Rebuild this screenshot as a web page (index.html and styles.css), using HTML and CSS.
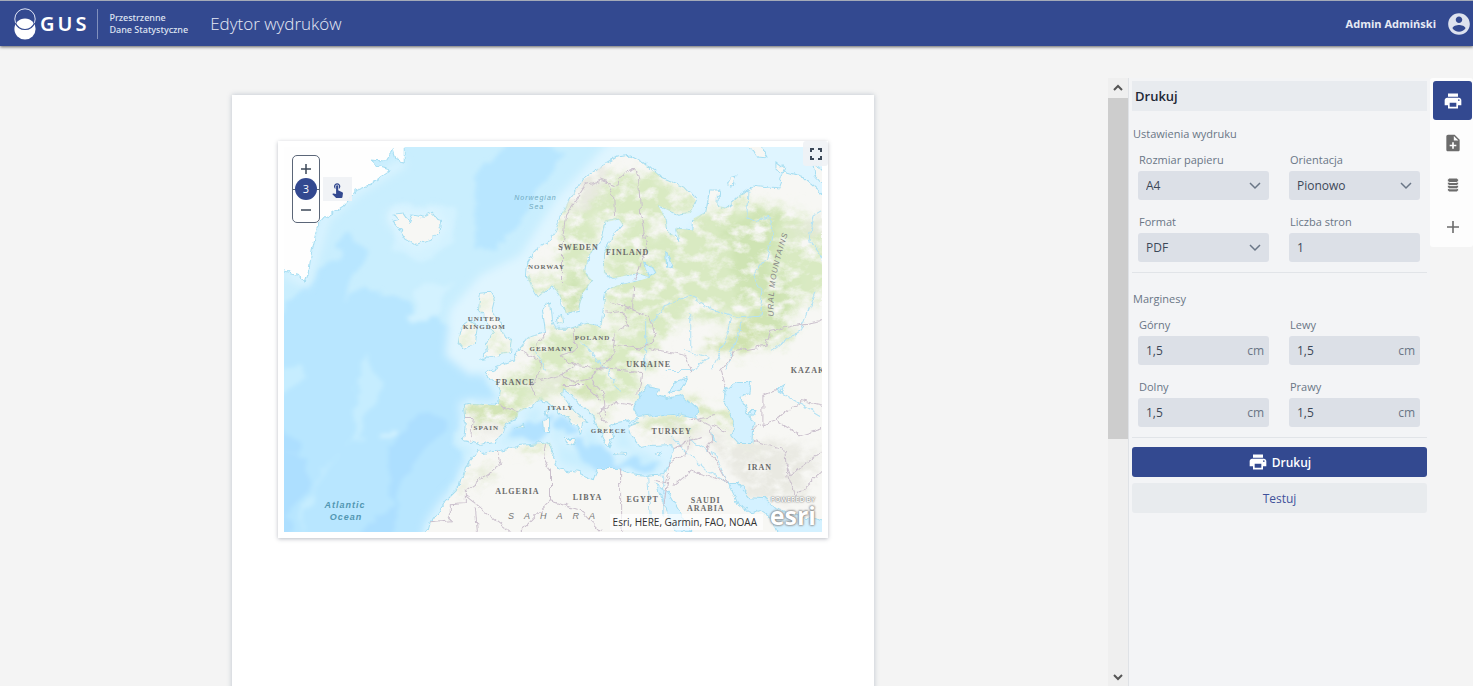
FILE: index.html
```html
<!DOCTYPE html>
<html lang="pl">
<head>
<meta charset="utf-8">
<title>Edytor wydruków</title>
<link rel="stylesheet" href="styles.css">
</head>
<body>
<svg class="sprite" aria-hidden="true">
  <symbol id="i-print" viewBox="0 0 24 24"><path d="M19 8H5c-1.660 0-3 1.340-3 3v6h4v4h12v-4h4v-6c0-1.660-1.340-3-3-3zm-3 11H8v-5h8v5zm3-7c-.55 0-1-.45-1-1s.45-1 1-1 1 .45 1 1-.45 1-1 1zm-1-9H6v4h12V3z"/></symbol>
  <symbol id="i-user" viewBox="0 0 24 24"><path d="M12 2C6.480 2 2 6.480 2 12s4.480 10 10 10 10-4.480 10-10S17.520 2 12 2zm0 3c1.660 0 3 1.340 3 3s-1.340 3-3 3-3-1.340-3-3 1.340-3 3-3zm0 14.200c-2.500 0-4.710-1.280-6-3.220.03-1.990 4-3.080 6-3.080 1.990 0 5.970 1.090 6 3.080-1.290 1.940-3.500 3.220-6 3.220z"/></symbol>
  <symbol id="i-note" viewBox="0 0 24 24"><path d="M14 2H6c-1.100 0-2 .9-2 2v16c0 1.100.9 2 2 2h12c1.100 0 2-.9 2-2V8l-6-6zm2 14h-3v3h-2v-3H8v-2h3v-3h2v3h3v2zm-3-7V3.500L18.500 9H13z"/></symbol>
  <symbol id="i-chevron" viewBox="0 0 12 8"><path d="M1 1l5 5 5-5" fill="none" stroke="currentColor" stroke-width="1.500"/></symbol>
</svg>

<header class="topbar">
  <svg class="logo" viewBox="0 0 24 34" aria-hidden="true">
    <circle cx="12" cy="12" r="10.200" fill="none" stroke="#dfe5f6" stroke-width="1"/>
    <circle cx="12" cy="22" r="10.600" fill="#fff"/>
    <path d="M2.500 16a10.200 10.200 0 0 0 19 0" fill="none" stroke="#33488f" stroke-width="1.200"/>
  </svg>
  <span class="brand">GUS</span>
  <span class="tagline">Przestrzenne<br>Dane Statystyczne</span>
  <h1 class="title">Edytor wydruków</h1>
  <span class="user">Admin Admiński</span>
  <button class="avatar" aria-label="Konto"><svg><use href="#i-user"/></svg></button>
</header>

<main class="workspace">
  <section class="canvas">
    <div class="sheet">
      <div class="map">
        <svg class="map-view" viewBox="284 147 537 384" preserveAspectRatio="xMidYMid slice" role="img" aria-label="Mapa Europy">
          <defs>
            <filter id="rough" x="-5%" y="-5%" width="110%" height="110%"><feTurbulence type="fractalNoise" baseFrequency="0.11" numOctaves="3" seed="4"/><feDisplacementMap in="SourceGraphic" scale="7" xChannelSelector="R" yChannelSelector="G"/></filter>
            <filter id="sea" x="-10%" y="-10%" width="120%" height="120%"><feTurbulence type="fractalNoise" baseFrequency="0.04" numOctaves="4" seed="9" result="n"/><feDisplacementMap in="SourceGraphic" in2="n" scale="26" xChannelSelector="R" yChannelSelector="G"/><feGaussianBlur stdDeviation="2"/></filter>
            <filter id="soft" x="-10%" y="-10%" width="120%" height="120%"><feGaussianBlur stdDeviation="4"/></filter>
            <filter id="veg" filterUnits="userSpaceOnUse" x="284" y="147" width="538" height="384"><feTurbulence type="fractalNoise" baseFrequency="0.06 0.08" numOctaves="5" seed="12" result="n"/><feGaussianBlur in="SourceGraphic" stdDeviation="6" result="b"/><feDisplacementMap in="b" in2="n" scale="24" xChannelSelector="R" yChannelSelector="G" result="d"/><feColorMatrix in="n" type="matrix" values="0 0 0 0 0  0 0 0 0 0  0 0 0 0 0  0 0 0 3 -0.650" result="m"/><feComposite in="d" in2="m" operator="in"/></filter>
            <path id="continent" d="M538 297L530 286 526 275 527 263 535 250 550 240 556 228 560 217 570 197 583 180 600 167 617 157 630 155 643 162 660 177 683 187 695 200 690 213 677 215 657 205 665 218 667 230 678 240 675 228 692 230 693 218 705 212 709 190 718 190 717 205 725 208 737 197 753 185 777 188 783 172 803 178 830 202V540H425L430 522 445 500 460 485 465 467 475 455 478 449 482 453 500 450 520 445 550 442 553 450 552 458 558 468 577 472 593 479 598 468 617 468 630 473 647 475 663 473 668 463 672 448 671 444 650 445 640 447 632 437 628 425 637 422 627 420 617 422 610 425 613 437 608 447 602 438 597 427 593 417 583 407 572 395 563 388 562 395 570 407 588 422 582 423 580 433 577 425 560 413 547 402 540 399 518 412 517 417 505 423 502 433 493 442 480 445 472 442 463 440 465 423 463 405 470 403 498 405 500 390 497 383 485 372 500 365 512 360 518 350 528 337 545 332 542 308 550 302 552 320 555 328 570 328 587 323 600 327 603 307 605 290 617 285 633 282 650 277 637 273 613 278 603 273 603 253 612 237 622 225 618 219 605 222 602 237 587 257 585 273 592 280 582 293 578 310 565 313 560 297 552 285Z"/>
            <path id="islands" d="M480 293L490 292 495 300 492 312 500 323 505 337 512 340 510 352 480 358 487 352 485 345 492 333 485 317 478 310ZM470 320L477 325 475 343 462 348 457 342 460 327ZM392 221L398 219 394 214 403 213 409 222 412 215 423 217 432 212 442 225 433 238 417 245 405 238 400 230ZM556 319L562 315 563 323 557 324ZM744 140L760 145 767 158 757 157ZM775 161L784 168 781 173 775 167ZM728 178L735 176 732 185 728 184ZM812 165L823 170 823 186 814 176ZM543 421L549 419 549 431 544 431ZM545 410L549 409 548 417ZM564 438L575 438 573 444 564 440ZM614 452L626 453 625 455 614 454ZM655 453L662 451 659 456ZM515 428L523 423 524 427Z"/>
            <clipPath id="landclip"><use href="#continent"/><use href="#islands"/></clipPath>
          </defs>
          <rect x="284" y="147" width="538" height="384" fill="#c9eefe"/>
          <g filter="url(#sea)">
            <path fill="#b8e6ff" d="M475 170L515 140 570 150 530 200 510 245 475 250ZM270 315L320 270 355 235 370 250 340 300 390 290 440 320 480 345 490 385 515 410 465 400 455 440 470 460 430 520 420 550 270 550Z"/>
            <path fill="#addfff" d="M270 425L305 435 300 455 270 450ZM390 440L430 415 450 430 420 450 410 480 395 500 390 550 350 550 390 500ZM270 450L310 460 285 550 270 550Z"/>
            <path fill="#c6edff" d="M285 365L300 362 305 380 285 390ZM365 350L385 390 365 425 350 440 320 475 305 500 302 550 310 495 345 445 355 420Z"/>
            <path fill="#d3f2ff" d="M390 205L450 205 460 235 420 260 390 250ZM420 290L445 280 440 310 415 320ZM385 429L393 438 378 435Z"/>
          </g>
          <g filter="url(#soft)" fill="#dff5ff">
            <path d="M520 255L555 200 610 140H840V210H700L640 290 560 350 470 375 445 355 450 310 480 275Z"/>
            <path d="M620 210H602L590 260 540 320 630 330 645 260Z"/>
            <g fill="none" stroke="#dff5ff" stroke-width="9" opacity=".8"><use href="#continent"/><use href="#islands"/><path d="M404 162L355 192 325 218 313 260 305 282 285 272"/></g>
          </g>
          <g filter="url(#sea)" fill="#b2e2ff">
            <path d="M520 425L545 410 550 435 510 440ZM552 410L580 432 565 438 552 425ZM575 440L600 445 625 462 660 455 655 470 610 465 595 470 577 455Z"/>
          </g>
          <g filter="url(#rough)">
            <g fill="#f7f7f4" stroke="#a6def2" stroke-width="1"><use href="#continent"/><use href="#islands"/></g>
            <path fill="#fefefe" stroke="#a6def2" d="M278 140H404V162L395 160 392 150 385 161 372 160 380 167 390 170 370 184 355 190 350 199 345 205 325 218 317 227 312 250 309 270 305 282 297 274 278 269Z"/>
          </g>
          <g clip-path="url(#landclip)"><g filter="url(#veg)" fill="#d9eac2">
            <path d="M560 215L605 175 655 170 700 205 650 225 640 280 680 320 650 350 610 310 605 265 620 220 600 215 590 265 575 320 555 305 558 260Z"/>
            <path d="M640 235L740 200 790 210 840 230V300L795 300 785 345 765 350 750 320 710 320 640 310Z"/>
            <path fill="#cfe4b4" d="M720 225L775 205 775 295 740 300ZM762 290L795 275 780 345 762 345ZM565 290L590 265 585 320 565 315Z"/>
            <path d="M540 330L600 325 645 340 655 365 600 380 560 380 525 360ZM510 375L550 360 560 390 510 410 495 400ZM590 375L635 370 645 395 600 405Z"/>
            <path fill="#cfe2ae" d="M460 400L535 408 515 424 468 418ZM560 375L600 385 585 400 565 390ZM675 395L745 418 740 428 690 412ZM635 418L700 418 690 428 645 430ZM515 449L550 442 535 454ZM730 441L760 446 745 452ZM455 490L495 462 485 478ZM695 355L765 305 755 350ZM595 405L610 425 600 425ZM540 395L580 425 575 425Z"/>
            <path d="M530 285L545 265 555 290 540 300ZM480 340L515 340 500 357ZM478 300L492 295 490 310ZM458 330L475 325 470 345Z"/>
          </g>
          <g filter="url(#veg)" fill="#e9e9e2"><path d="M560 205L600 160 615 170 580 215ZM530 380L560 372 560 384 530 390ZM635 430L700 430 690 445ZM700 430L820 450 800 500 750 500ZM455 490L500 460 480 482ZM560 400L580 425 575 415ZM780 235L830 215V230ZM475 420L505 425 490 445Z"/></g></g>
          <g filter="url(#rough)">
            <g fill="#c0e9fe" stroke="#a6def2">
              <path d="M633 408L638 397 647 385 660 388 657 395 667 398 680 395 697 410 695 418 673 413 653 415 638 417Z"/>
              <path fill="#d4f1ff" d="M667 392L672 383 687 378 678 390ZM725 388L737 382 750 382 748 393 740 397 747 412 753 422 752 443 737 443 730 435 733 425 727 407 722 398ZM655 483L667 492 690 531 675 531ZM727 482L737 482 750 497 765 498 775 508 795 514 830 522V540H780L772 520 758 510 750 512 738 505 732 492ZM643 263L652 265 655 273 648 277ZM665 252L668 258 672 267 666 268ZM750 410L756 410 754 416 749 414ZM776 390L784 385 780 392ZM712 432L715 440 712 438Z"/>
              <path fill="#d9f3ff" d="M625 420L636 417 637 419 628 422Z"/>
            </g>
            <g fill="none" stroke="#b3e2f4" stroke-width="1">
              <path d="M747 190L746 218 757 222 768 215 772 235 766 258 752 275 762 292 758 315 735 317 712 310 690 295 665 305 650 325M730 317L727 330 720 350 712 368M742 320L725 370M645 320V370M580 340L610 375 620 390M665 370L690 370 707 357 685 350M822 258L808 240 812 215 822 209M815 290L800 330 770 350M535 350L545 370M663 474V515M647 474L650 525M670 435L705 470 725 482M690 440L715 455 727 482M780 392L798 402 820 415M690 315L690 350"/>
            </g>
            <g fill="none" stroke="#cbc0cd" stroke-width="1">
              <path d="M561 285V250L565 215 585 185 600 180 615 186 623 173 635 168 638 180 640 215 646 245 640 265 633 280M614 217L613 195 605 180M633 285L632 310 610 302M605 312L622 310 628 325 618 330M632 310L648 315 655 335 642 348 613 345 615 330M647 348L685 355 690 372M572 328L575 350 560 355 575 365 600 368 612 355 613 345M520 350L540 362 538 378 528 385 535 397M545 332L536 345M575 365L560 375 575 382 590 378 600 368 640 372 637 395M540 380L560 375M563 385L585 385 600 400M590 378L603 392 605 415M597 412L615 402 633 405M597 412L605 422M500 405L518 412M465 418L472 418 470 440M497 451L500 465 465 490V502L450 503V520L430 522M465 495L510 531M475 507L477 531M545 443L543 458 550 470V500L520 531M550 500L580 510 600 531M620 468V531M668 463L665 482 655 480M672 448L700 437M695 420L710 425 712 440 705 448 715 460 727 482M672 485L690 470 727 482M690 437L685 455 668 463M663 505L668 475M712 425L725 430M725 388L720 370 735 350 765 345 770 330 822 320M762 428V395L775 390M750 428L775 420 800 435 822 428M753 440L785 450 787 475 795 495 822 470M785 462L790 475 822 450M775 420L800 400 822 405M690 420L715 415"/>
            </g>
          </g>
          <g class="lbl">
            <text x="578" y="250">SWEDEN</text><text x="627" y="255">FINLAND</text><text class="tight" x="546" y="269">NORWAY</text>
            <text class="tight" x="484" y="321">UNITED</text><text class="tight" x="484" y="329">KINGDOM</text>
            <text class="tight" x="592" y="340">POLAND</text><text class="tight" x="551" y="351">GERMANY</text><text x="648" y="367">UKRAINE</text>
            <text x="515" y="385">FRANCE</text><text class="tight" x="560" y="410">ITALY</text><text class="tight" x="486" y="429">SPAIN</text>
            <text class="tight" x="608" y="432">GREECE</text><text x="671" y="433">TURKEY</text><text x="807" y="373">KAZAK</text><text x="759" y="469">IRAN</text>
            <text x="517" y="493">ALGERIA</text><text x="587" y="499">LIBYA</text><text x="642" y="501">EGYPT</text>
            <text x="705" y="502">SAUDI</text><text x="705" y="510">ARABIA</text>
          </g>
          <g class="lbl-water"><text x="535" y="200">Norwegian</text><text x="536" y="209">Sea</text></g>
          <g class="lbl-ocean"><text x="345" y="507">Atlantic</text><text x="346" y="519">Ocean</text></g>
          <text class="lbl-desert" x="556" y="518">SAHARA</text>
          <path id="ural" d="M773 316C771 290 776 265 789 228" fill="none"/>
          <text class="lbl-range"><textPath href="#ural">URAL MOUNTAINS</textPath></text>
        </svg>
        <div class="zoomer">
          <button aria-label="Przybliż"><svg viewBox="0 0 12 12"><path d="M6 1v10M1 6h10"/></svg></button>
          <span class="level">3</span>
          <button aria-label="Oddal"><svg viewBox="0 0 12 12"><path d="M1 6h10"/></svg></button>
        </div>
        <button class="touch" aria-label="Wskaż"><svg viewBox="0 0 24 24"><path d="M9 11.240V7.500C9 6.120 10.120 5 11.500 5S14 6.120 14 7.500v3.740c1.210-.81 2-2.180 2-3.740C16 5.010 13.990 3 11.500 3S7 5.010 7 7.500c0 1.560.79 2.930 2 3.740zm9.840 4.630l-4.540-2.260c-.17-.07-.35-.11-.54-.11H13v-6c0-.83-.67-1.500-1.500-1.500S10 6.670 10 7.500v10.740l-3.430-.72c-.08-.01-.15-.03-.24-.03-.31 0-.59.13-.79.33l-.79.8 4.940 4.940c.27.27.65.44 1.060.44h6.790c.75 0 1.330-.55 1.440-1.280l.75-5.270c.01-.07.02-.14.02-.2 0-.62-.38-1.160-.91-1.380z"/></svg></button>
        <button class="full" aria-label="Pełny ekran"><svg viewBox="0 0 12 12"><path d="M1 4V1h3M8 1h3v3M11 8v3H8M4 11H1V8"/></svg></button>
        <span class="credit">Esri, HERE, Garmin, FAO, NOAA</span>
        <span class="esri"><small>POWERED BY</small><b>esri</b></span>
      </div>
    </div>
  </section>

  <div class="scroll" aria-hidden="true">
    <svg viewBox="0 0 12 8"><path d="M2 6l4-4 4 4"/></svg>
    <div class="track"><div class="thumb"></div></div>
    <svg viewBox="0 0 12 8"><path d="M2 3l4 4 4-4"/></svg>
  </div>

  <form class="panel">
    <h2>Drukuj</h2>
    <fieldset>
      <legend>Ustawienia wydruku</legend>
      <div class="fields">
        <div class="field"><label for="size">Rozmiar papieru</label><div class="box"><select id="size"><option>A4</option></select><svg><use href="#i-chevron"/></svg></div></div>
        <div class="field"><label for="orient">Orientacja</label><div class="box"><select id="orient"><option>Pionowo</option></select><svg><use href="#i-chevron"/></svg></div></div>
        <div class="field"><label for="format">Format</label><div class="box"><select id="format"><option>PDF</option></select><svg><use href="#i-chevron"/></svg></div></div>
        <div class="field"><label for="pages">Liczba stron</label><div class="box"><input id="pages" value="1"></div></div>
      </div>
    </fieldset>
    <fieldset>
      <legend>Marginesy</legend>
      <div class="fields">
        <div class="field"><label for="mt">Górny</label><div class="box"><input id="mt" value="1,5"><span>cm</span></div></div>
        <div class="field"><label for="ml">Lewy</label><div class="box"><input id="ml" value="1,5"><span>cm</span></div></div>
        <div class="field"><label for="mb">Dolny</label><div class="box"><input id="mb" value="1,5"><span>cm</span></div></div>
        <div class="field"><label for="mr">Prawy</label><div class="box"><input id="mr" value="1,5"><span>cm</span></div></div>
      </div>
    </fieldset>
    <div class="actions">
      <button type="button" class="primary"><svg><use href="#i-print"/></svg>Drukuj</button>
      <button type="button" class="secondary">Testuj</button>
    </div>
  </form>

  <nav class="tools">
    <button class="active" aria-label="Drukuj"><svg><use href="#i-print"/></svg></button>
    <button aria-label="Dodaj stronę"><svg><use href="#i-note"/></svg></button>
    <button aria-label="Dane"><svg viewBox="0 0 20 20"><g stroke="#fdfdfd" stroke-width="1"><rect x="4.500" y="12.500" width="11" height="4.500" rx="2.200"/><rect x="4.500" y="9.300" width="11" height="4.500" rx="2.200"/><rect x="4.500" y="6.100" width="11" height="4.500" rx="2.200"/><rect x="4.500" y="3" width="11" height="4.500" rx="2.200"/></g></svg></button>
    <button aria-label="Dodaj"><svg viewBox="0 0 20 20"><path d="M10 4v12M4 10h12" stroke="currentColor" stroke-width="1.600"/></svg></button>
  </nav>
</main>
</body>
</html>
```

FILE: styles.css
```css
* { box-sizing: border-box; }
body {
  margin: 0;
  height: 100vh;
  overflow: hidden;
  display: flex;
  flex-direction: column;
  background: #f4f4f4;
  font-family: "Open Sans", "Noto Sans", sans-serif;
  font-size: 12px;
  color: #3c4858;
}
button, input, select { font: inherit; color: inherit; border: 0; padding: 0; margin: 0; background: none; }
svg { display: block; fill: currentColor; flex: none; }
.sprite { position: absolute; width: 0; height: 0; }

.topbar {
  height: 46px;
  flex: none;
  display: flex;
  align-items: center;
  padding: 0 1px 0 13px;
  background: #334990;
  border-top: 1px solid #a4aab8;
  box-shadow: 0 1px 3px rgba(0, 0, 0, .6);
  color: #fff;
}
.logo { width: 24px; height: 34px; }
.brand {
  margin-left: 3px;
  padding-right: 8px;
  font: 600 20px/30px "Noto Sans", sans-serif;
  letter-spacing: 3px;
  border-right: 1px solid #8190bd;
}
.tagline { margin-left: 11px; font: 500 9px/12px "Noto Sans", sans-serif; color: #dfe4f2; }
.title { margin: 0 auto 0 22px; font-size: 17px; font-weight: 300; color: #e6eaf5; }
.user { font-size: 11px; font-weight: 700; color: #e6eaf5; }
.avatar { margin-left: 10px; color: #dde2ee; }
.avatar svg { width: 26px; height: 26px; }

.workspace { flex: 1; min-height: 0; display: flex; padding-top: 32px; }
.canvas { flex: 1; min-width: 0; margin-top: -32px; padding: 49px 2px 0 0; overflow: hidden; }
.sheet {
  width: 58%;
  min-width: 642px;
  aspect-ratio: 210 / 297;
  margin: 0 auto;
  padding: 46px;
  background: #fff;
  box-shadow: 0 0 5px rgba(100, 120, 145, .4);
}
.map { position: relative; padding: 6px; background: #fff; box-shadow: 0 1px 4px rgba(60, 70, 90, .35); }
.map-view { width: 100%; height: auto; }

.lbl text, .lbl-water text, .lbl-ocean text, .lbl-desert { text-anchor: middle; }
.lbl { font: 700 8px "Liberation Serif", serif; letter-spacing: 1px; fill: #6b6b6b; }
.lbl .tight { font-size: 7px; }
.lbl-water { font: italic 7px "Liberation Sans", sans-serif; letter-spacing: 1px; fill: #70aac0; }
.lbl-ocean { font: italic 700 9px "Liberation Sans", sans-serif; letter-spacing: 1px; fill: #5296b2; }
.lbl-desert { font: italic 9px "Liberation Sans", sans-serif; letter-spacing: 10px; fill: #777; }
.lbl-range { font: italic 8px "Liberation Sans", sans-serif; letter-spacing: 1px; fill: #858585; }

.zoomer {
  position: absolute;
  left: 14px;
  top: 14px;
  width: 28px;
  height: 68px;
  padding: 3px 0;
  display: flex;
  flex-direction: column;
  align-items: center;
  justify-content: space-between;
  background: #fff linear-gradient(#5b6678, #5b6678) center / 100% 1px no-repeat;
  border: 1px solid #5b6678;
  border-radius: 5px;
}
.zoomer button { flex: 1; width: 100%; display: grid; place-items: center; }
.zoomer svg { width: 12px; height: 12px; stroke: #3c4858; stroke-width: 1.5; }
.level {
  width: 22px;
  height: 22px;
  border-radius: 50%;
  background: #334990;
  color: #fff;
  font-size: 11px;
  line-height: 22px;
  text-align: center;
}
.touch, .full { position: absolute; display: grid; place-items: center; background: rgba(240, 242, 245, .9); }
.touch { left: 45px; top: 36px; width: 29px; height: 24px; color: #334990; }
.touch svg { width: 17px; height: 17px; }
.full { right: 0; top: 0; width: 25px; height: 25px; border-radius: 3px; }
.full svg { width: 12px; height: 12px; fill: none; stroke: #3c4858; stroke-width: 2; }
.credit {
  position: absolute;
  right: 65px;
  bottom: 8px;
  padding: 0 6px 0 3px;
  font-size: 10px;
  line-height: 16px;
  color: #323232;
  background: rgba(255, 255, 255, .66);
}
.esri {
  position: absolute;
  right: 12px;
  bottom: 8px;
  display: flex;
  flex-direction: column;
  align-items: center;
  color: #fff;
}
.esri small { font-size: 7px; line-height: 8px; font-weight: 600; text-shadow: 0 0 1px #777, 0 0 2px #777; }
.esri b { font-size: 25px; line-height: 22px; padding-bottom: 4px; text-shadow: 0 0 2px #888, 0 0 2px #888, 0 0 3px #999; }

.scroll {
  width: 20px;
  flex: none;
  display: flex;
  flex-direction: column;
  align-items: center;
  background: #efefef;
}
.scroll svg { width: 12px; height: 20px; fill: none; stroke: #555; stroke-width: 2; }
.track { flex: 1; width: 100%; }
.thumb { height: 60%; background: #cdcdcd; }

.panel {
  width: 302px;
  flex: none;
  padding: 3px;
  background: #f3f4f6;
  border-left: 1px solid #dfe2e6;
}
.panel h2 {
  margin: 0 0 14px;
  padding-left: 3px;
  font-size: 13px;
  line-height: 30px;
  font-weight: 600;
  color: #1f2836;
  background: #e8ebef;
}
fieldset { border: 0; border-bottom: 1px solid #e1e4e8; margin: 0 0 17px; padding: 0 0 10px; min-width: 0; }
fieldset:last-of-type { margin-bottom: 9px; }
legend { padding: 0 1px; margin-bottom: 8px; font-size: 11px; line-height: 18px; color: #6a7686; }
.fields { display: grid; grid-template-columns: 1fr 1fr; gap: 13px 20px; padding: 0 7px 0 6px; }
.field { min-width: 0; display: flex; flex-direction: column; gap: 2px; }
.field label { padding-left: 1px; font-size: 11px; line-height: 18px; color: #6a7686; }
.box { display: flex; align-items: center; height: 29px; background: #dce0e7; border-radius: 3px; }
.box select, .box input { flex: 1; min-width: 0; height: 29px; padding-left: 8px; appearance: none; outline: 0; }
.box span { padding-right: 5px; color: #6a7686; }
.box svg { width: 12px; height: 8px; margin-right: 8px; color: #6a7686; }
.actions { display: flex; flex-direction: column; gap: 6px; }
.actions button { display: flex; align-items: center; justify-content: center; gap: 4px; height: 30px; border-radius: 3px; }
.actions svg { width: 20px; height: 20px; }
.primary { background: #334990; color: #fff; font-weight: 600; }
.secondary { background: #e8ebee; color: #3f529b; }

.tools {
  align-self: flex-start;
  flex: none;
  display: flex;
  flex-direction: column;
  gap: 3px;
  padding: 3px 1px 1px 3px;
  background: #fdfdfd;
  border-radius: 3px;
  color: #6c6c6c;
}
.tools button { width: 39px; height: 39px; display: grid; place-items: center; border-radius: 3px; }
.tools svg { width: 20px; height: 20px; }
.tools .active { background: #334990; color: #fff; }
```
